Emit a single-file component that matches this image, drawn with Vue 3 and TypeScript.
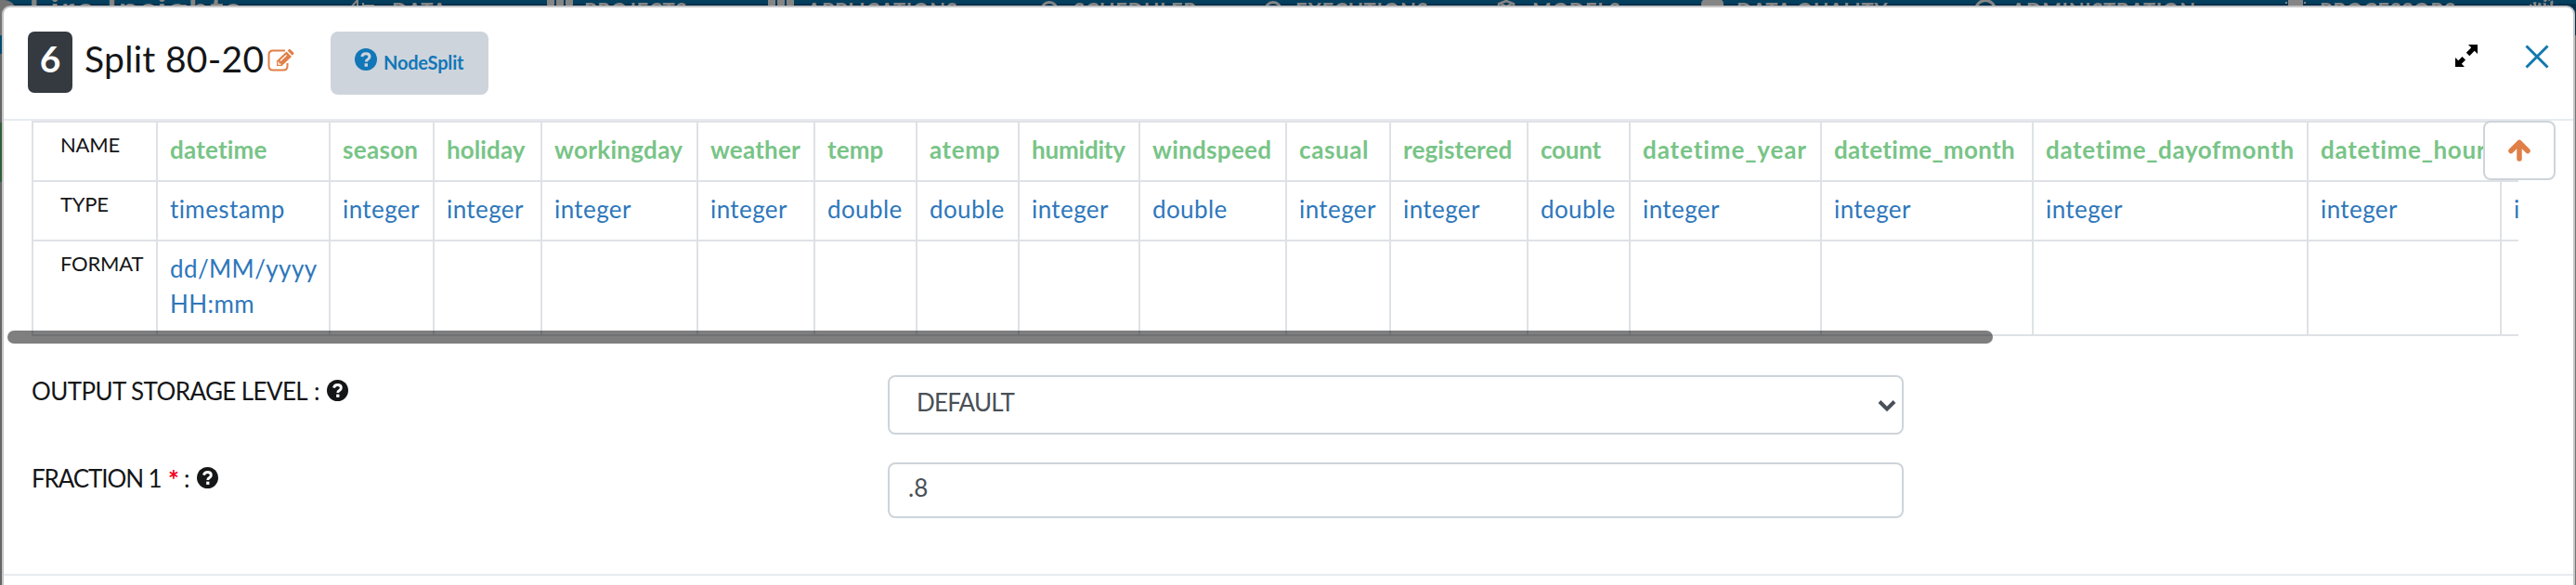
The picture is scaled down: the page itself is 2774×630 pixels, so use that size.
<script setup lang="ts">
interface Column { name: string; type: string; format: string; width: number; spacing: number }
interface NavItem { label: string; icon: 'data' | 'grid' | 'ring' | 'cube' | 'db' | 'chip'; iconWidth: number; gap: number; width: number; before: number }

const navItems: NavItem[] = [
  { label: 'DATA', icon: 'data', iconWidth: 28, gap: 18, width: 53, before: 114 },
  { label: 'PROJECTS', icon: 'grid', iconWidth: 28, gap: 12, width: 109, before: 114 },
  { label: 'APPLICATIONS', icon: 'grid', iconWidth: 28, gap: 14, width: 158, before: 89 },
  { label: 'SCHEDULER', icon: 'ring', iconWidth: 20, gap: 16, width: 130, before: 93 },
  { label: 'EXECUTIONS', icon: 'ring', iconWidth: 20, gap: 14, width: 142, before: 75 },
  { label: 'MODELS', icon: 'cube', iconWidth: 20, gap: 18, width: 92, before: 75 },
  { label: 'DATA QUALITY', icon: 'db', iconWidth: 24, gap: 14, width: 163, before: 90 },
  { label: 'ADMINISTRATION', icon: 'ring', iconWidth: 24, gap: 16, width: 193, before: 93 },
  { label: 'PROCESSORS', icon: 'chip', iconWidth: 22, gap: 15, width: 151, before: 102 },
]

const columns: Column[] = [
  { name: 'datetime', type: 'timestamp', format: 'dd/MM/yyyy HH:mm', width: 186, spacing: 0.2 },
  { name: 'season', type: 'integer', format: '', width: 112, spacing: 0.3 },
  { name: 'holiday', type: 'integer', format: '', width: 116, spacing: 0.1 },
  { name: 'workingday', type: 'integer', format: '', width: 168, spacing: 0.3 },
  { name: 'weather', type: 'integer', format: '', width: 126, spacing: 0.2 },
  { name: 'temp', type: 'double', format: '', width: 110, spacing: 0.1 },
  { name: 'atemp', type: 'double', format: '', width: 110, spacing: 0.6 },
  { name: 'humidity', type: 'integer', format: '', width: 130, spacing: -0.2 },
  { name: 'windspeed', type: 'double', format: '', width: 158, spacing: 0.3 },
  { name: 'casual', type: 'integer', format: '', width: 112, spacing: 0.6 },
  { name: 'registered', type: 'integer', format: '', width: 148, spacing: 0.1 },
  { name: 'count', type: 'double', format: '', width: 110, spacing: -0.2 },
  { name: 'datetime_year', type: 'integer', format: '', width: 206, spacing: 0.9 },
  { name: 'datetime_month', type: 'integer', format: '', width: 228, spacing: 0.3 },
  { name: 'datetime_dayofmonth', type: 'integer', format: '', width: 296, spacing: 0.65 },
  { name: 'datetime_hour', type: 'integer', format: '', width: 208, spacing: 0.7 },
  { name: 'datetime_weekofyear', type: 'integer', format: '', width: 296, spacing: 0.5 },
]
const tableWidth = 134 + columns.reduce((sum, c) => sum + c.width, 0)
</script>

<template>
  <div class="page">
    <nav class="nav">
      <span class="logo-dot"></span>
      <span class="brand">Fire Insights</span>
      <div v-for="item in navItems" :key="item.label" class="nav-item" :style="{ marginLeft: item.before + 'px', gap: item.gap + 'px' }">
        <svg class="nav-icon" :width="item.iconWidth" height="24" :viewBox="`0 0 ${item.iconWidth} 24`">
          <path v-if="item.icon === 'data'" d="M1 9L9 0V22M15 3V20M15 6H27" fill="none" stroke="currentColor" stroke-width="2" />
          <g v-else-if="item.icon === 'grid'">
            <rect v-for="i in 6" :key="i" :x="((i - 1) % 3) * 10" :y="i > 3 ? 8 : -2" width="8" height="9" rx="2" />
          </g>
          <circle v-else-if="item.icon === 'ring'" :cx="item.iconWidth / 2" cy="11" :r="item.iconWidth / 2 - 1.5" fill="none" stroke="currentColor" stroke-width="3" />
          <path v-else-if="item.icon === 'cube'" d="M10 1L18 4V17L10 22L2 17V4ZM4 4L10 7L16 4" fill="none" stroke="currentColor" stroke-width="2.500" />
          <rect v-else-if="item.icon === 'db'" y="-1" width="24" height="20" rx="5" />
          <path v-else d="M3 0H19V20H3ZM0 2H2V4H0ZM20 2H22V4H20Z" />
        </svg>
        <span class="nav-label" :style="{ width: item.width + 'px' }">{{ item.label }}</span>
      </div>
      <svg class="nav-icon gears" width="28" height="24" viewBox="0 0 28 24">
        <circle cx="9" cy="11" r="7" fill="none" stroke="currentColor" stroke-width="4" stroke-dasharray="3 2" />
        <circle cx="22" cy="3" r="4" fill="none" stroke="currentColor" stroke-width="3" stroke-dasharray="3 1.5" />
      </svg>
    </nav>
    <div class="strip"><i class="strip-blue"></i><i class="strip-green"></i></div>

    <section class="modal">
      <header class="head">
        <span class="badge">6</span>
        <h1 class="title">Split 80-20</h1>
        <svg class="edit" width="30" height="24" viewBox="0 0 30 24">
          <path d="M19 1.5H6Q1.5 1.5 1.5 6V18Q1.5 22.5 6 22.5H17Q21.500 22.5 21.500 18V15" fill="none" stroke="currentColor" stroke-width="2" />
          <path d="M10 18V12.500L20.500 2.500L26 8L15.500 18Z" />
          <path d="M21.500 1.500L23 0.300Q24 -0.400 25 0.500L28 3.400Q29 4.500 28 5.500L26.800 6.800Z" />
          <path d="M14 12.500L20.500 6.200M11.800 13.500V16.200H14.500" fill="none" stroke="#fff" stroke-width="1.200" />
        </svg>
        <button class="node-button">
          <svg class="help" width="24" height="24" viewBox="0 0 24 24">
            <circle cx="12" cy="12" r="12" />
            <path d="M7.800 9Q8.500 5.700 12.100 5.700Q16 5.700 16 9Q16 10.700 14 12Q12.300 13 12.300 14.600" fill="none" stroke="#ced4dc" stroke-width="3" />
            <rect x="10.600" y="16.300" width="3.400" height="3.400" fill="#ced4dc" />
          </svg>
          <span>NodeSplit</span>
        </button>
        <span class="spacer"></span>
        <svg class="expand" width="24" height="24" viewBox="0 0 24 24">
          <path d="M14 0H24V10L20.700 6.800L15.300 12.200L11.800 8.700L17.200 3.300ZM0 24V14L3.300 17.200L7.500 13L11 16.500L6.800 20.700L10 24Z" />
        </svg>
        <svg class="close" width="26" height="26" viewBox="0 0 26 26">
          <path d="M1.500 1.500L24.500 24.500M24.500 1.500L1.500 24.500" fill="none" stroke="currentColor" stroke-width="3" />
        </svg>
      </header>

      <div class="schema">
        <div class="table-clip">
          <table class="grid" :style="{ width: tableWidth + 'px' }">
            <colgroup>
              <col class="label-col" />
              <col v-for="c in columns" :key="c.name" :style="{ width: c.width + 'px' }" />
            </colgroup>
            <tbody>
              <tr class="row">
                <th>NAME</th>
                <td v-for="c in columns" :key="c.name" class="name" :style="{ letterSpacing: c.spacing + 'px' }">{{ c.name }}</td>
              </tr>
              <tr class="row">
                <th>TYPE</th>
                <td v-for="c in columns" :key="c.name">{{ c.type }}</td>
              </tr>
              <tr class="row-format">
                <th>FORMAT</th>
                <td v-for="c in columns" :key="c.name">{{ c.format }}</td>
              </tr>
            </tbody>
          </table>
        </div>
        <div class="scrollbar"></div>
        <button class="up">
          <svg width="24" height="24" viewBox="0 0 24 24">
            <path d="M12 21V4M3 12.500L12 3.500L21 12.500" fill="none" stroke="currentColor" stroke-width="5.500" stroke-linecap="round" stroke-linejoin="round" />
          </svg>
        </button>
      </div>

      <div class="form">
        <div class="field">
          <label class="label"><span class="storage">OUTPUT STORAGE LEVEL</span><span class="colon">:</span>
            <svg class="help" width="23" height="23" viewBox="0 0 24 24">
              <circle cx="12" cy="12" r="12" />
              <path d="M7.800 9Q8.500 5.700 12.100 5.700Q16 5.700 16 9Q16 10.700 14 12Q12.300 13 12.300 14.600" fill="none" stroke="#fff" stroke-width="3" />
              <rect x="10.600" y="16.300" width="3.400" height="3.400" fill="#fff" />
            </svg>
          </label>
          <div class="control select">
            <span>DEFAULT</span>
            <svg width="20" height="14" viewBox="0 0 20 14">
              <path d="M2 2.500L10 10.500L18 2.500" fill="none" stroke="currentColor" stroke-width="4" />
            </svg>
          </div>
        </div>
        <div class="field second">
          <label class="label"><span class="fraction">FRACTION 1</span><span class="star">*</span><span class="colon">:</span>
            <svg class="help" width="23" height="23" viewBox="0 0 24 24">
              <circle cx="12" cy="12" r="12" />
              <path d="M7.800 9Q8.500 5.700 12.100 5.700Q16 5.700 16 9Q16 10.700 14 12Q12.300 13 12.300 14.600" fill="none" stroke="#fff" stroke-width="3" />
              <rect x="10.600" y="16.300" width="3.400" height="3.400" fill="#fff" />
            </svg>
          </label>
          <div class="control input"><span>.8</span></div>
        </div>
      </div>
      <footer class="foot"></footer>
    </section>
  </div>
</template>

<style>
body { margin: 0; overflow: hidden; }
</style>

<style scoped>
* { box-sizing: border-box; }
.page { position: relative; width: 2774px; height: 630px; overflow: hidden; background: #747474; font-family: Lato, "Open Sans", sans-serif; color: #151618; }
svg { display: block; flex: none; fill: currentColor; overflow: visible; }
.nav { display: flex; align-items: flex-start; height: 38px; overflow: hidden; background: linear-gradient(#053f5e 0 4px, #04304c 4px 100%); color: #858585; white-space: nowrap; }
.logo-dot { width: 18px; height: 38px; background: #747474; border-radius: 0 14px 0 0; }
.brand { width: 231px; margin-left: 13px; margin-top: -13px; font-size: 38px; line-height: 44px; font-weight: 700; letter-spacing: 1.9px; }
.nav-item { display: flex; align-items: flex-start; }
.nav-label { margin-top: -1px; font-size: 22px; line-height: 26px; font-weight: 700; letter-spacing: 0.6px; }
.gears { margin-left: 73px; }
.strip { width: 4px; height: 592px; background: #656566; }
.strip i { display: block; width: 4px; }
.strip-blue { height: 20px; background: #054a70; }
.strip-green { height: 64px; margin-top: 74px; background: #2f5e38; }
.modal { position: absolute; left: 2px; top: 6px; width: 2771px; height: 640px; border: 2px solid #c5c5c7; border-radius: 9px; background: #fff; }
.head { display: flex; align-items: flex-start; height: 122px; padding-left: 26px; border-bottom: 2px solid #e7ebef; }
.badge { width: 48px; height: 66px; margin-top: 26px; border-radius: 7px; background: #343a40; color: #fff; font-size: 39px; line-height: 58px; font-weight: 700; text-align: center; }
.title { width: 196px; margin: 26px 0 0 13px; font-size: 39px; line-height: 59px; font-weight: 400; letter-spacing: 0.3px; white-space: nowrap; }
.edit { margin: 45px 0 0 1px; color: #e07f46; }
.node-button { display: flex; align-items: flex-start; width: 170px; height: 68px; margin: 26px 0 0 38px; padding: 18px 0 0 26px; border: 0; border-radius: 8px; background: #ced4dc; color: #1277b8; font: 700 20px/24px Lato, sans-serif; letter-spacing: -0.2px; }
.node-button span { margin: 3px 0 0 7px; }
.spacer { flex: 1; }
.expand { margin-top: 40px; color: #000; }
.close { margin: 40px 26px 0 51px; color: #1278ad; }
.schema { position: relative; height: 240px; padding-left: 30px; }
.table-clip { width: 2678px; height: 232px; overflow: hidden; border-bottom: 2px solid #dee2e6; }
.grid { table-layout: fixed; border-spacing: 0; }
.label-col { width: 134px; }
.row { height: 64px; }
.row-format { height: 102px; }
th, td { border: 0 solid #dee2e6; border-width: 2px 0 0 2px; text-align: left; vertical-align: top; }
th { padding: 7px 0 0 29px; font-size: 22px; line-height: 34px; font-weight: 400; letter-spacing: -0.2px; }
td { padding: 10px 8px 0 13px; color: #2e77bb; font-size: 26px; line-height: 38px; letter-spacing: 0.4px; }
.name { padding-top: 10px; color: #78c487; font-weight: 700; }
.scrollbar { position: absolute; left: 4px; top: 226px; width: 2138px; height: 14px; border-radius: 7px; background: rgba(0, 0, 0, 0.5); }
.up { position: absolute; left: 2670px; top: 0; display: flex; align-items: center; justify-content: center; width: 78px; height: 64px; padding: 0; border: 2px solid #ced4da; border-radius: 8px; background: #fff; color: #e07f46; }
.form { height: 248px; padding: 34px 0 0 31px; }
.field { display: flex; height: 64px; font-size: 26px; }
.second { margin-top: 30px; }
.label { display: flex; align-items: flex-start; width: 921px; line-height: 38px; white-space: nowrap; }
.storage { width: 304px; margin: -2px 0 0 -1px; letter-spacing: -0.6px; }
.fraction { width: 147px; margin: -2px 0 0 -1px; letter-spacing: -1.1px; }
.star { width: 17px; margin-top: -1px; color: #f5001d; font-size: 28px; font-weight: 700; }
.colon { width: 14px; margin-top: -2px; }
.label .help { margin-top: 5px; }
.control { display: flex; justify-content: space-between; width: 1094px; border: 2px solid #ced4da; border-radius: 8px; color: #495057; line-height: 38px; }
.select { height: 64px; padding: 8px 6px 0 29px; letter-spacing: -0.8px; }
.select svg { margin-top: 16px; }
.input { height: 60px; padding: 6px 0 0 20px; }
.foot { height: 20px; border-top: 2px solid #e7ebef; }
</style>
